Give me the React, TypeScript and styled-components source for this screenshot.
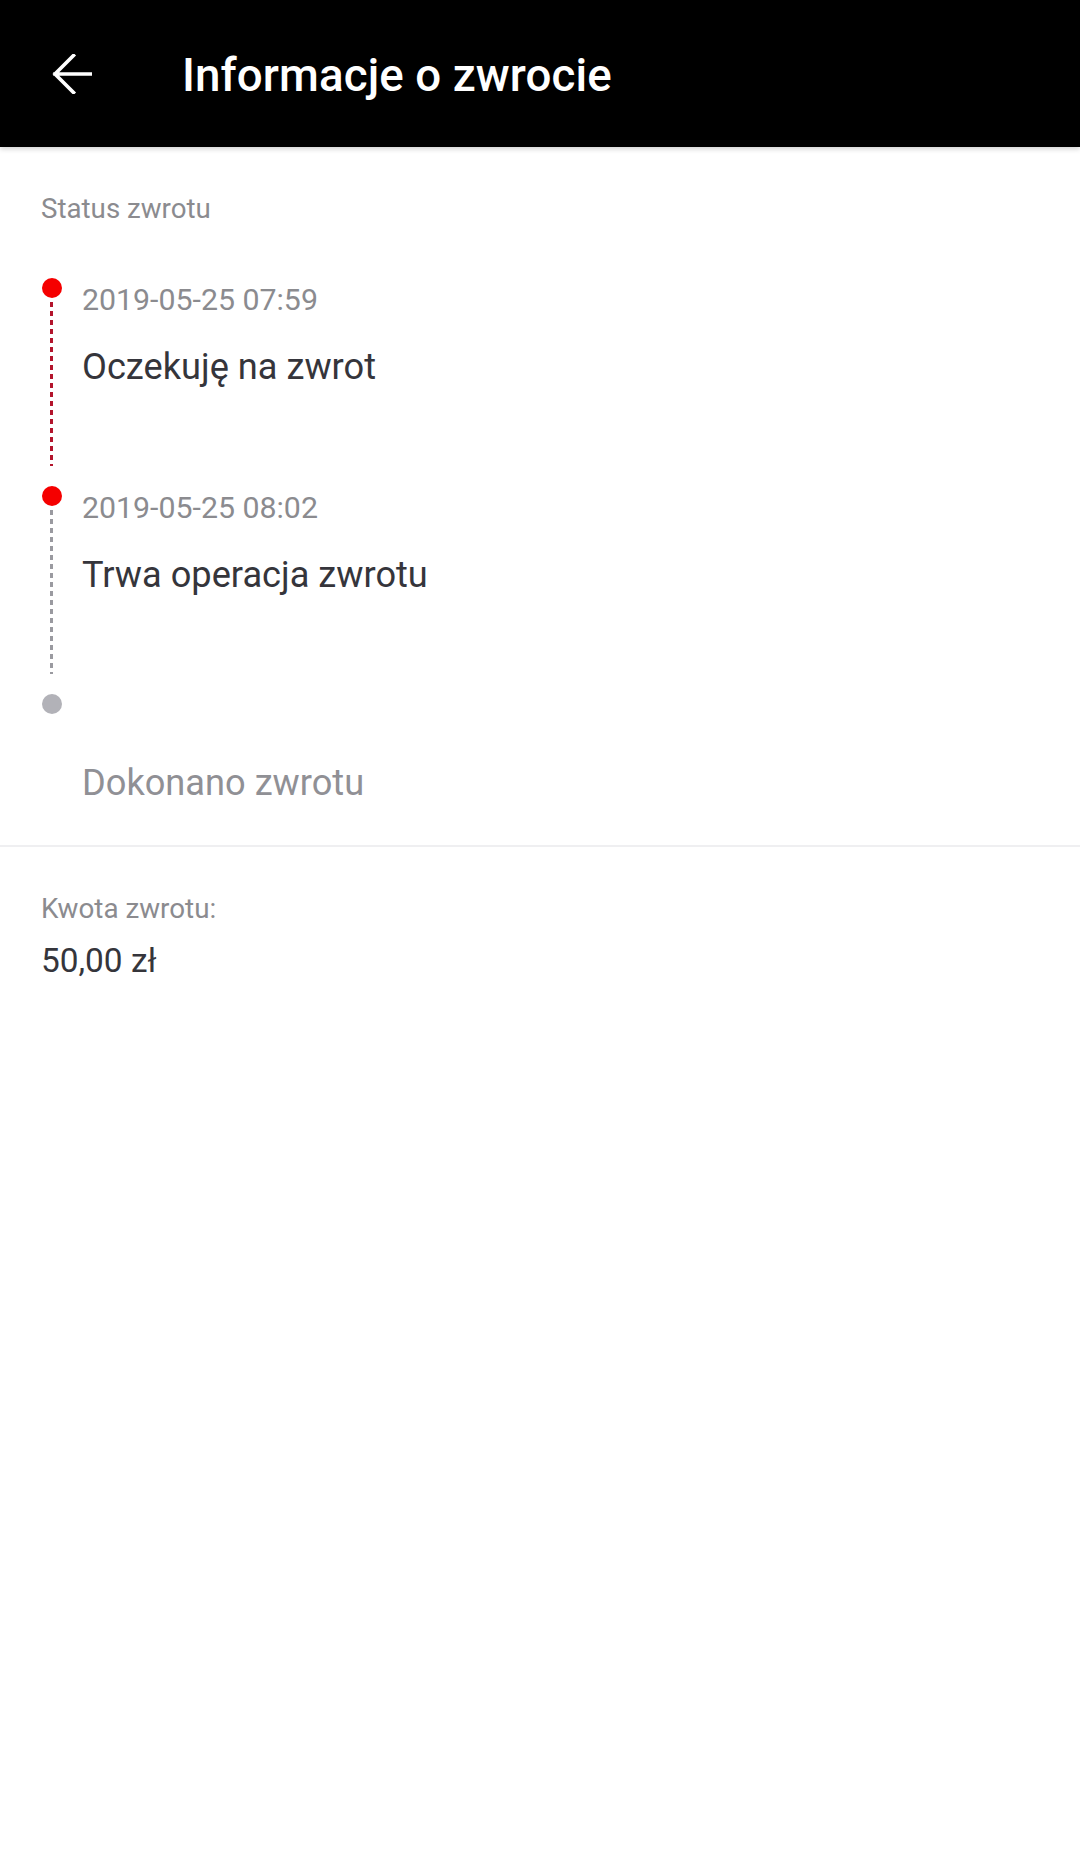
import React from "react";
import styled, { createGlobalStyle } from "styled-components";

const GlobalStyle = createGlobalStyle`
  html, body {
    margin: 0;
    padding: 0;
    background: #ffffff;
    font-family: Roboto, "Noto Sans", "Liberation Sans", sans-serif;
  }
  #root {
    min-height: 1854px;
    background: #ffffff;
  }
`;

type StepProps = {
  $done: boolean;
  $last?: boolean;
};

const Page = styled.div`
  width: 1080px;
  min-height: 1854px;
  background: #ffffff;
`;

const Header = styled.header`
  height: 147px;
  box-sizing: border-box;
  padding: 4px 0 0 52px;
  background: #000000;
  display: flex;
  align-items: center;
  box-shadow: 0 2px 5px rgba(0, 0, 0, 0.18);
  position: relative;
  z-index: 1;
`;

const BackButton = styled.button`
  border: none;
  background: none;
  padding: 0;
  width: 40px;
  height: 40px;
  display: flex;
  align-items: center;
  justify-content: center;
  margin: -4px 90px 0 0;
  &:hover {
    cursor: pointer;
  }
`;

const Title = styled.h1`
  margin: 0;
  color: #ffffff;
  font-size: 45.7px;
  font-weight: 500;
  letter-spacing: 0.1px;
`;

const StatusSection = styled.section`
  padding: 45px 41px 0 41px;
  border-bottom: 2px solid #efeff1;
`;

const SectionLabel = styled.div`
  color: #8b8b8f;
  font-size: 27.7px;
  line-height: 34px;
  margin-bottom: 52px;
`;

const Step = styled.div<StepProps>`
  display: flex;
  min-height: ${(props) => (props.$last ? "151px" : "208px")};
`;

const Rail = styled.div`
  width: 21px;
  display: flex;
  flex-direction: column;
  align-items: center;
  margin-right: 20px;
`;

const Dot = styled.div<StepProps>`
  width: 20px;
  height: 20px;
  border-radius: 50%;
  flex-shrink: 0;
  background: ${(props) => (props.$done ? "#f50000" : "#b2b2b8")};
`;

const DashLine = styled.div<StepProps>`
  flex: 1;
  width: 3px;
  margin: 4px 0 20px;
  background: repeating-linear-gradient(
    to bottom,
    ${(props) => (props.$done ? "#b3142c" : "#9a9aa0")} 0 5px,
    transparent 5px 9px
  );
`;

const StepBody = styled.div`
  display: flex;
  flex-direction: column;
`;

const StepDate = styled.div`
  color: #8b8b8f;
  font-size: 30.3px;
  line-height: 40px;
  height: 40px;
  margin-top: 2px;
`;

const StepText = styled.div<StepProps>`
  color: ${(props) => (props.$done ? "#35353b" : "#909095")};
  font-size: 36.2px;
  line-height: 44px;
  margin-top: 25px;
`;

const AmountSection = styled.section`
  padding: 45px 41px 0;
`;

const AmountLabel = styled.div`
  color: #8b8b8f;
  font-size: 27.8px;
  line-height: 34px;
`;

const AmountValue = styled.div`
  color: #35353b;
  font-size: 33.4px;
  line-height: 42px;
  margin-top: 14px;
`;

type StepData = {
  date: string;
  text: string;
  done: boolean;
};

const steps: StepData[] = [
  { date: "2019-05-25 07:59", text: "Oczekuję na zwrot", done: true },
  { date: "2019-05-25 08:02", text: "Trwa operacja zwrotu", done: true },
  { date: "", text: "Dokonano zwrotu", done: false },
];

const BackArrow = () => (
  <svg width="40" height="40" viewBox="0 0 40 40" fill="none">
    <path
      d="M39 20H3M21.5 1.5L3 20l18.5 18.5"
      stroke="#ffffff"
      strokeWidth="3.6"
      strokeLinecap="square"
    />
  </svg>
);

const App: React.FC = () => {
  return (
    <Page>
      <GlobalStyle />
      <Header>
        <BackButton aria-label="Wstecz">
          <BackArrow />
        </BackButton>
        <Title>Informacje o zwrocie</Title>
      </Header>

      <StatusSection>
        <SectionLabel>Status zwrotu</SectionLabel>
        {steps.map((step, i) => {
          const last = i === steps.length - 1;
          return (
            <Step key={i} $done={step.done} $last={last}>
              <Rail>
                <Dot $done={step.done} />
                {!last && <DashLine $done={steps[i + 1].done} />}
              </Rail>
              <StepBody>
                <StepDate>{step.date}</StepDate>
                <StepText $done={step.done}>{step.text}</StepText>
              </StepBody>
            </Step>
          );
        })}
      </StatusSection>

      <AmountSection>
        <AmountLabel>Kwota zwrotu:</AmountLabel>
        <AmountValue>50,00 zł</AmountValue>
      </AmountSection>
    </Page>
  );
};

export default App;
